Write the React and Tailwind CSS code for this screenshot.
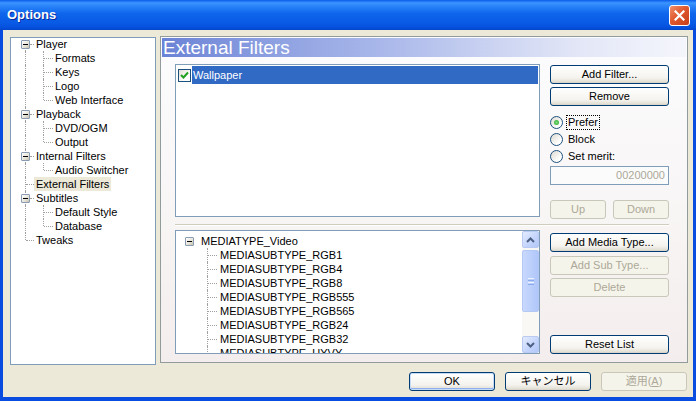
import React from 'react';

const LINE = 'absolute border-dotted border-[#a0a0a0]';

const leftTree = [
  { t: 'Player', lvl: 0, exp: true, first: true },
  { t: 'Formats', lvl: 1 },
  { t: 'Keys', lvl: 1 },
  { t: 'Logo', lvl: 1 },
  { t: 'Web Interface', lvl: 1, last: true },
  { t: 'Playback', lvl: 0, exp: true },
  { t: 'DVD/OGM', lvl: 1 },
  { t: 'Output', lvl: 1, last: true },
  { t: 'Internal Filters', lvl: 0, exp: true },
  { t: 'Audio Switcher', lvl: 1, last: true },
  { t: 'External Filters', lvl: 0, sel: true },
  { t: 'Subtitles', lvl: 0, exp: true },
  { t: 'Default Style', lvl: 1 },
  { t: 'Database', lvl: 1, last: true },
  { t: 'Tweaks', lvl: 0, end: true },
];

const subTypes = [
  'MEDIASUBTYPE_RGB1',
  'MEDIASUBTYPE_RGB4',
  'MEDIASUBTYPE_RGB8',
  'MEDIASUBTYPE_RGB555',
  'MEDIASUBTYPE_RGB565',
  'MEDIASUBTYPE_RGB24',
  'MEDIASUBTYPE_RGB32',
  'MEDIASUBTYPE_UYVY',
];

const Btn = ({ children, disabled, def, className = '' }) => (
  <div
    className={`flex items-center justify-center h-[19px] rounded-[3px] border shrink-0 ${
      disabled
        ? 'border-[#c9c7ba] text-[#aca899] bg-[#f5f4ea]'
        : 'border-[#003c74] text-black bg-[linear-gradient(to_bottom,#ffffff,#f4f3ee_70%,#e3e0d6_92%,#d6d0c5)]'
    } ${def ? 'shadow-[inset_0_0_0_1px_#c6dbf8,inset_0_-1px_0_1px_#8eb0ec]' : ''} ${className}`}
  >
    {children}
  </div>
);

const Expander = ({ className = '' }) => (
  <span className={`absolute w-[9px] h-[9px] border border-[#8a9cb3] rounded-[1px] bg-[linear-gradient(135deg,#ffffff,#e6e3d8_60%,#c5c0ae)] flex items-center justify-center ${className}`}>
    <span className="block w-[5px] h-[1px] bg-black" />
  </span>
);

const Radio = ({ label, checked, focus }) => (
  <div className="flex items-center h-[17px] gap-[3px]">
    <span className="w-[13px] h-[13px] rounded-full border border-[#1c5180] bg-[linear-gradient(135deg,#dcd9cf,#ffffff_75%)] flex items-center justify-center">
      {checked && <span className="w-[5px] h-[5px] rounded-full bg-[radial-gradient(circle,#7fe07f,#21a121)]" />}
    </span>
    <span className={`leading-[13px] px-[1px] ${focus ? 'border border-dotted border-black' : 'border border-transparent'}`}>{label}</span>
  </div>
);

function LeftRow({ item }) {
  const { t, lvl, exp, last, sel, first, end } = item;
  return (
    <div className="relative h-[14px] leading-[14px] whitespace-nowrap">
      {first ? (
        <span className={`${LINE} border-l left-[14px] top-[7px] bottom-0`} />
      ) : end ? (
        <span className={`${LINE} border-l left-[14px] top-0 h-[7px]`} />
      ) : (
        <span className={`${LINE} border-l left-[14px] top-0 bottom-0`} />
      )}
      {lvl === 0 ? (
        <>
          {exp ? (
            <>
              <span className={`${LINE} border-t left-[19px] w-[4px] top-[7px]`} />
              <Expander className="left-[10px] top-[3px]" />
            </>
          ) : (
            <span className={`${LINE} border-t left-[15px] w-[8px] top-[7px]`} />
          )}
          <span className={`absolute left-[23px] top-0 h-[14px] px-[2px] ${sel ? 'bg-[#ece9d8]' : ''}`}>{t}</span>
        </>
      ) : (
        <>
          {last ? (
            <span className={`${LINE} border-l left-[32px] top-0 h-[7px]`} />
          ) : (
            <span className={`${LINE} border-l left-[32px] top-0 bottom-0`} />
          )}
          <span className={`${LINE} border-t left-[33px] w-[9px] top-[7px]`} />
          <span className="absolute left-[44px] top-0">{t}</span>
        </>
      )}
    </div>
  );
}

const Arrow = ({ up }) => (
  <svg width="9" height="6" viewBox="0 0 9 6">
    <polyline
      points={up ? '1,5 4.5,1.5 8,5' : '1,1 4.5,4.5 8,1'}
      fill="none"
      stroke="#4d6185"
      strokeWidth="2"
    />
  </svg>
);

const ScrollBtn = ({ up }) => (
  <div className="h-[17px] rounded-[2px] border border-[#b9cbf3] bg-[linear-gradient(135deg,#e3ebfe,#c3d4fc_60%,#b2c7f8)] flex items-center justify-center">
    <Arrow up={up} />
  </div>
);

function ScrollBar() {
  return (
    <div className="w-[17px] h-full flex flex-col bg-[#f9f8f4]">
      <ScrollBtn up />
      <div className="mt-[2px] h-[62px] rounded-[2px] border border-[#b4c8f6] bg-[linear-gradient(to_right,#c9d8fd,#bcd0fb_50%,#b0c6f9)] flex flex-col items-center justify-center gap-[1px]">
        <span className="block w-[6px] h-[1px] bg-[#eef4fe]" />
        <span className="block w-[6px] h-[1px] bg-[#8cabef]" />
        <span className="block w-[6px] h-[1px] bg-[#eef4fe]" />
        <span className="block w-[6px] h-[1px] bg-[#8cabef]" />
      </div>
      <div className="flex-1" />
      <ScrollBtn />
    </div>
  );
}

function MediaTree() {
  return (
    <div className="w-[365px] h-[124px] border border-[#7f9db9] bg-white flex">
      <div className="flex-1 overflow-hidden pt-[3px]">
        <div className="relative h-[14px] leading-[14px] whitespace-nowrap">
          <Expander className="left-[9px] top-[3px]" />
          <span className="absolute left-[25px] top-0">MEDIATYPE_Video</span>
        </div>
        {subTypes.map((s) => (
          <div key={s} className="relative h-[14px] leading-[14px] whitespace-nowrap">
            <span className={`${LINE} border-l left-[31px] top-0 bottom-0`} />
            <span className={`${LINE} border-t left-[32px] w-[9px] top-[7px]`} />
            <span className="absolute left-[44px] top-0">{s}</span>
          </div>
        ))}
      </div>
      <ScrollBar />
    </div>
  );
}

function Panel() {
  return (
    <div className="ml-[4px] w-[528px] h-[327px] border border-[#919b9c] p-[1px] bg-[linear-gradient(to_bottom,#fcfcfe,#f8f5f5_55%,#f4eded)]">
      <div className="h-[19px] pl-[1px] text-white text-[19px] leading-[19px] bg-[linear-gradient(to_right,#6b83d6,#8ea1e1_22%,#a9b7ea_42%,#c9d2f1_62%,#e3e7f7_80%,#f5f6fc)]">
        External Filters
      </div>
      <div className="pl-[13px] pt-[7px]">
        <div className="flex h-[153px]">
          <div className="w-[365px] h-[153px] border border-[#7f9db9] bg-white pt-[1px] pl-[1px] pr-[1px]">
            <div className="flex items-center h-[18px]">
              <span className="ml-[1px] w-[13px] h-[13px] border border-[#1c5180] bg-[linear-gradient(135deg,#e0ddd3,#ffffff_70%)] flex items-center justify-center">
                <svg width="9" height="8" viewBox="0 0 9 8">
                  <polyline points="1,4 3.5,6.5 8,1.5" fill="none" stroke="#21a121" strokeWidth="2" />
                </svg>
              </span>
              <div className="ml-[1px] flex-1 h-full bg-[#316ac5] text-white leading-[18px] pl-[1px]">Wallpaper</div>
            </div>
          </div>
          <div className="ml-[10px] w-[119px] flex flex-col">
            <Btn className="mt-[1px]">Add Filter...</Btn>
            <Btn className="mt-[3px]">Remove</Btn>
            <div className="mt-[8px]">
              <Radio label="Prefer" checked focus />
              <Radio label="Block" />
              <Radio label="Set merit:" />
            </div>
            <div className="mt-[1px] h-[19px] border border-[#7f9db9] bg-[#fbfbfb] text-[#aca899] text-right pr-[3px] leading-[17px]">
              00200000
            </div>
            <div className="flex justify-between mt-[15px]">
              <Btn disabled className="w-[56px]">Up</Btn>
              <Btn disabled className="w-[56px]">Down</Btn>
            </div>
          </div>
        </div>
        <div className="mt-[7px] w-[494px] h-[2px] border-t border-[#d0cdbf] border-b border-b-white" />
        <div className="flex h-[124px] mt-[4px]">
          <MediaTree />
          <div className="ml-[10px] w-[119px] flex flex-col">
            <Btn className="mt-[3px]">Add Media Type...</Btn>
            <Btn disabled className="mt-[4px]">Add Sub Type...</Btn>
            <Btn disabled className="mt-[3px]">Delete</Btn>
            <Btn className="mt-auto">Reset List</Btn>
          </div>
        </div>
      </div>
    </div>
  );
}

function TitleBar() {
  return (
    <div className="h-[30px] shrink-0 flex items-center justify-between pl-[7px] pr-[6px] bg-[linear-gradient(to_bottom,#0a5ce8_0%,#3d95ff_10%,#2a84f9_20%,#0f66ec_45%,#0858e4_80%,#0550dc_92%,#0346c8_100%)]">
      <span className="text-white font-bold text-[13px] [text-shadow:1px_1px_#0a2a9c]">Options</span>
      <div className="w-[21px] h-[21px] rounded-[3px] border border-white bg-[linear-gradient(135deg,#f0906c,#e0582e_45%,#c73f18)] flex items-center justify-center">
        <svg width="11" height="11" viewBox="0 0 11 11">
          <path d="M1.5 1.5 L9.5 9.5 M9.5 1.5 L1.5 9.5" stroke="white" strokeWidth="2.2" strokeLinecap="square" />
        </svg>
      </div>
    </div>
  );
}

export default function App() {
  return (
    <div className="w-[696px] h-[401px] flex flex-col overflow-hidden select-none text-[11px] text-black font-['Liberation_Sans','Noto_Sans_CJK_JP',Arial,sans-serif]">
      <TitleBar />
      <div className="flex-1 flex flex-col bg-[#ece9d8] border-x-[3px] border-b-[4px] border-[#0a4be0]">
        <div className="flex items-start pt-[6px] pl-[7px]">
          <div className="mt-[1px] w-[146px] h-[328px] border border-[#7f9db9] bg-white overflow-hidden">
            <div className="-mt-px">
              {leftTree.map((item) => (
                <LeftRow key={item.t} item={item} />
              ))}
            </div>
          </div>
          <Panel />
        </div>
        <div className="flex justify-end gap-[10px] pr-[6px] mt-[7px]">
          <Btn def className="w-[86px]">OK</Btn>
          <Btn className="w-[86px]">キャンセル</Btn>
          <Btn disabled className="w-[86px]">
            <span>適用(<span className="underline">A</span>)</span>
          </Btn>
        </div>
      </div>
    </div>
  );
}
